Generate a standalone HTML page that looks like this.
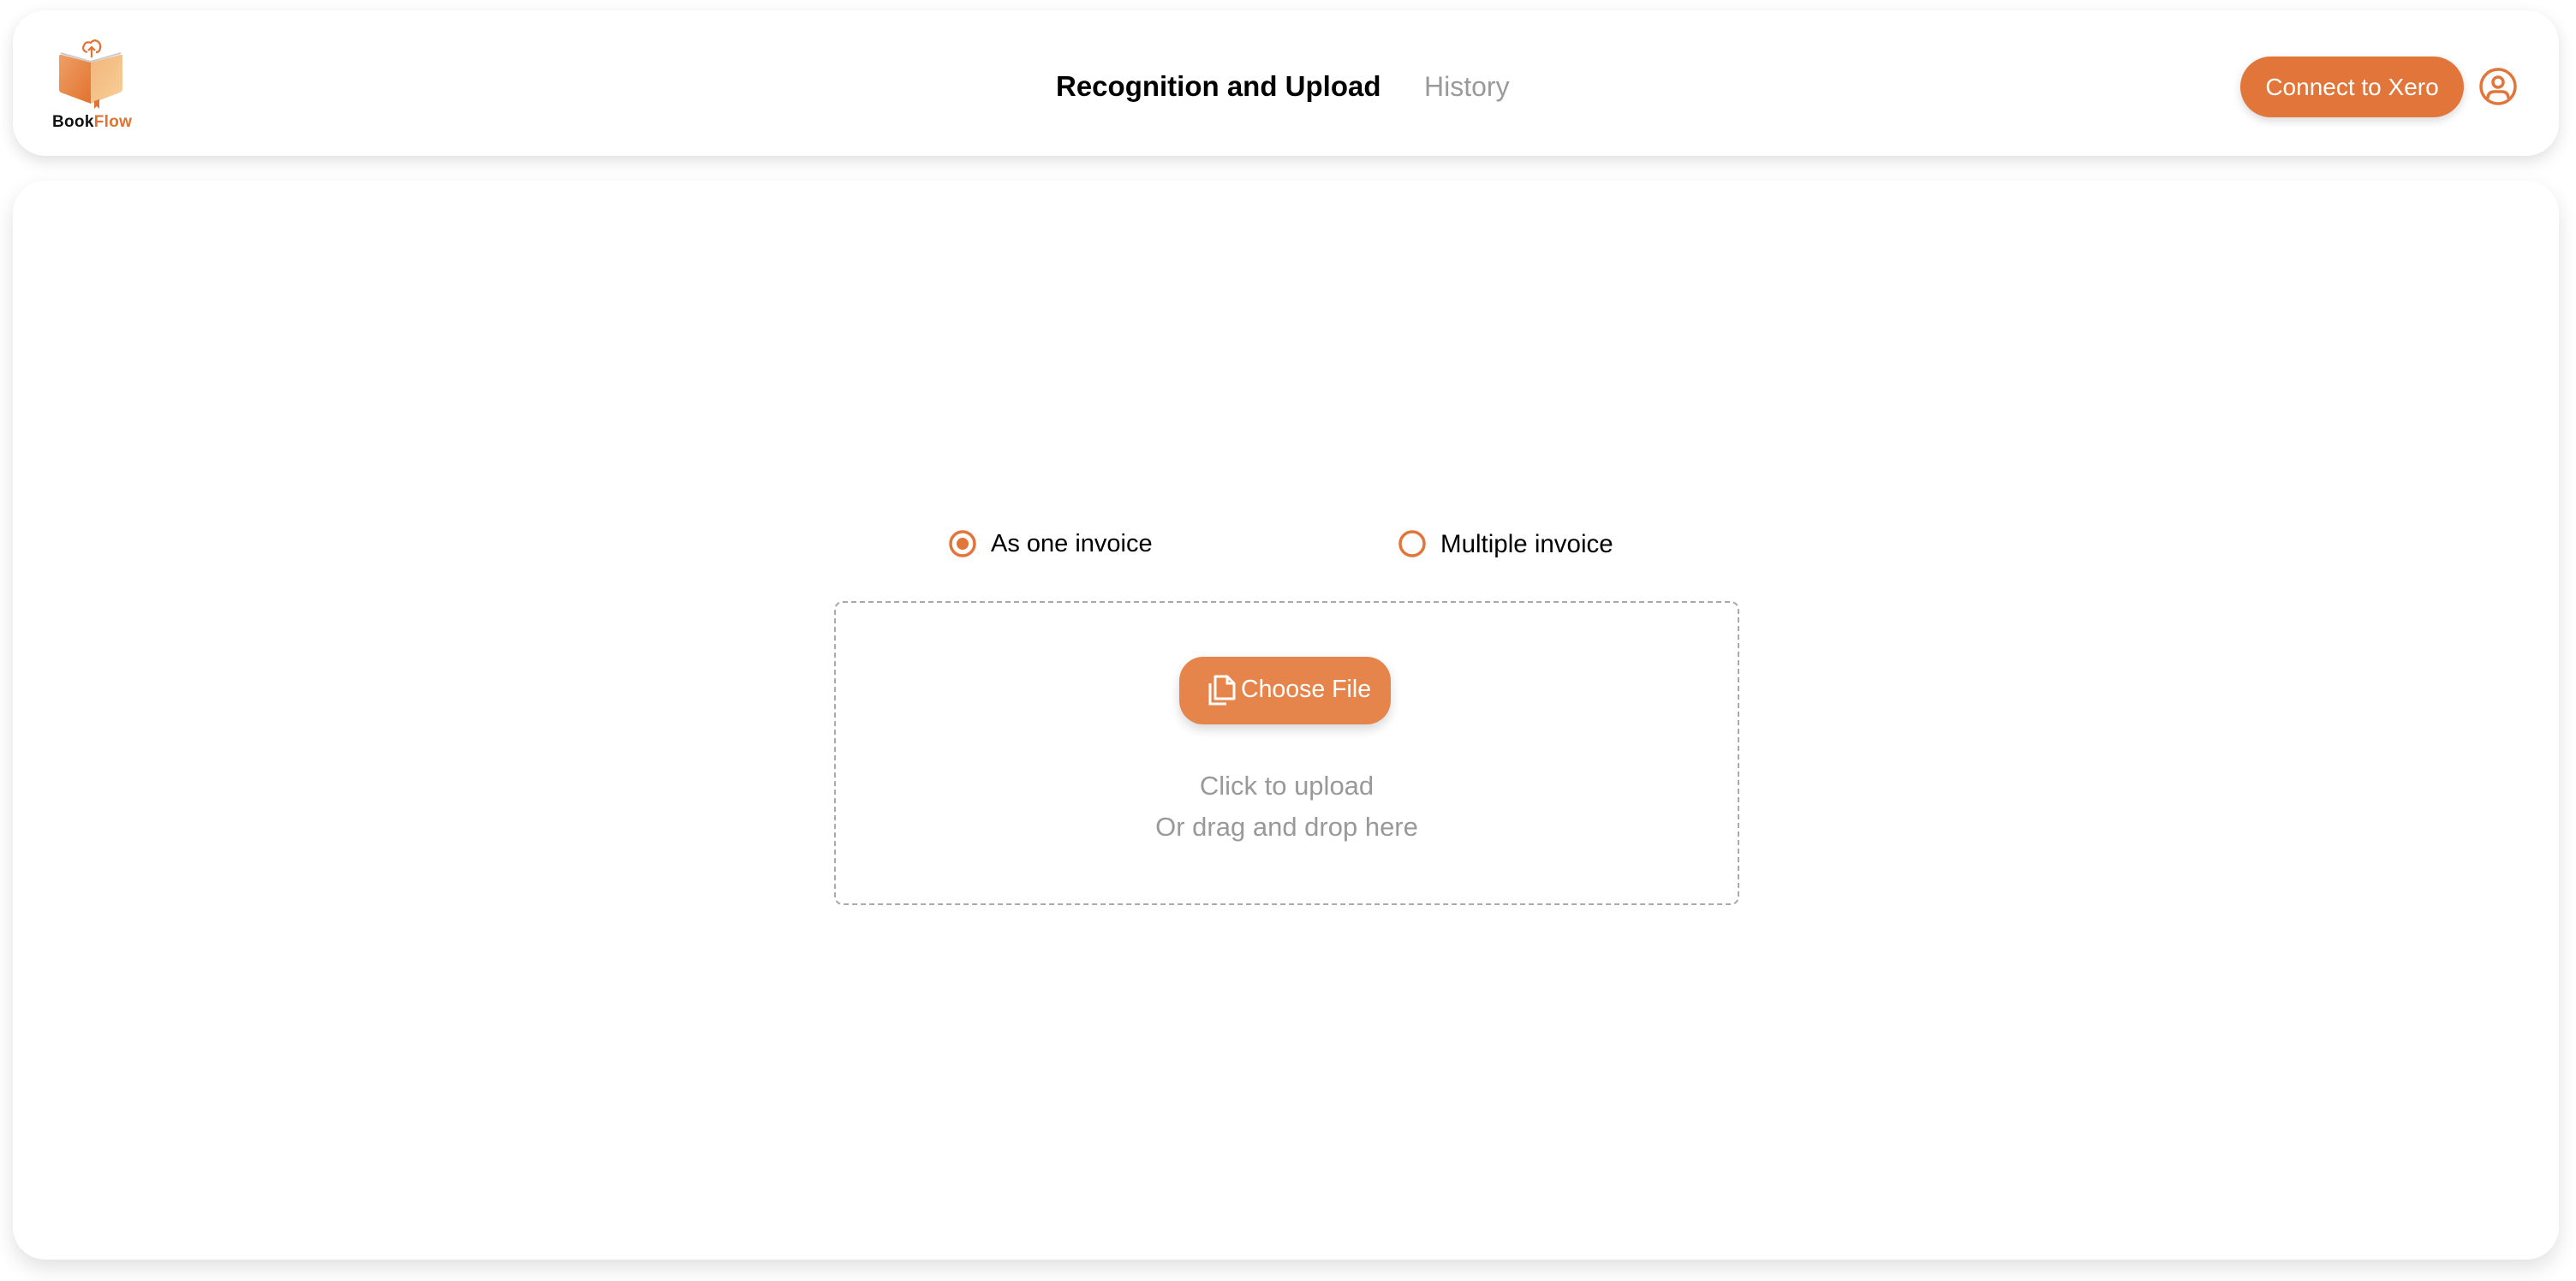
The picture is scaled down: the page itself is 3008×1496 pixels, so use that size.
<!DOCTYPE html>
<html><head><meta charset="utf-8"><style>
html,body{margin:0;padding:0}
body{width:3008px;height:1496px;background:#fff;position:relative;overflow:hidden;font-family:"Liberation Sans",sans-serif}
.card{position:absolute;background:#fff;border-radius:38px;box-shadow:0 6px 18px rgba(0,0,0,0.13)}
.abs{position:absolute}
</style></head><body>
<div class="card" style="left:15px;top:12px;width:2973px;height:170px"></div>
<div class="card" style="left:15px;top:211px;width:2973px;height:1260px;box-shadow:0 10px 24px rgba(0,0,0,0.12)"></div>

<svg class="abs" style="left:60px;top:44px" width="100" height="86" viewBox="0 0 100 86">
<defs>
<linearGradient id="gl" x1="0" y1="0" x2="1" y2="1"><stop offset="0" stop-color="#eea066"/><stop offset="1" stop-color="#e2722f"/></linearGradient>
<linearGradient id="gr" x1="0" y1="0" x2="1" y2="1"><stop offset="0" stop-color="#f2b57c"/><stop offset="1" stop-color="#f7cf97"/></linearGradient>
</defs>
<path d="M11 18 L46 28 L81 18" fill="none" stroke="#ccc" stroke-width="2"/>
<path d="M9 22 Q9 19 12 20 L46 29 L46 77 L11 64 Q9 63 9 60 Z" fill="url(#gl)"/>
<path d="M46 29 L80 20 Q83 19 83 22 L83 60 Q83 63 80 64 L46 77 Z" fill="url(#gr)"/>
<path d="M50 74 L50 83 L53 80 L56 83 L56 72 Z" fill="#e2722f"/>
<path d="M42 17 Q35 15 38 9 Q40 4 46 6 Q50 1 55 5 Q59 9 56 15 Q55 17 52 17" fill="none" stroke="#e2722f" stroke-width="2.2"/>
<path d="M47 23 L47 12 M43 15 L47 11 L51 15" fill="none" stroke="#e2722f" stroke-width="2.2"/>
</svg>
<div class="abs" style="left:61px;top:132px;font-size:19px;font-weight:bold;letter-spacing:0.3px;color:#111">Book<span style="color:#e2722f">Flow</span></div>

<div class="abs" style="left:1233px;top:82px;font-size:33px;font-weight:bold;color:#000">Recognition and Upload</div>
<div class="abs" style="left:1663px;top:83px;font-size:32px;color:#9a9a9a">History</div>

<div class="abs" style="left:2616px;top:66px;width:261px;height:71px;border-radius:36px;background:#e2763a;box-shadow:0 4px 10px rgba(0,0,0,0.15);color:#fff;font-size:28px;line-height:71px;text-align:center">Connect to Xero</div>
<svg class="abs" style="left:2894px;top:78px" width="46" height="46" viewBox="0 0 46 46">
<circle cx="23" cy="23" r="20" fill="none" stroke="#e2763a" stroke-width="3.5"/>
<circle cx="23" cy="18" r="6" fill="none" stroke="#e2763a" stroke-width="3.5"/>
<path d="M11 37 Q11 29 19 29 L27 29 Q35 29 35 37" fill="none" stroke="#e2763a" stroke-width="3.5"/>
</svg>

<svg class="abs" style="left:1107px;top:618px" width="34" height="34"><circle cx="17" cy="17" r="14" fill="none" stroke="#e2763a" stroke-width="3.5"/><circle cx="17" cy="17" r="7" fill="#e2763a"/></svg>
<div class="abs" style="left:1157px;top:619px;font-size:29px;color:#000">As one invoice</div>
<svg class="abs" style="left:1632px;top:618px" width="34" height="34"><circle cx="17" cy="17" r="14" fill="none" stroke="#e2763a" stroke-width="3.5"/></svg>
<div class="abs" style="left:1682px;top:619px;font-size:29.5px;color:#000">Multiple invoice</div>

<div class="abs" style="left:974px;top:702px;width:1053px;height:351px;border:2px dashed #aaa;border-radius:10px"></div>
<div class="abs" style="left:1377px;top:767px;width:247px;height:79px;border-radius:28px;background:#e5854c;box-shadow:0 6px 12px rgba(0,0,0,0.15)"></div>
<svg class="abs" style="left:1408px;top:786px" width="38" height="40" viewBox="0 0 38 40">
<path d="M5 12 L5 36 L24 36" fill="none" stroke="#fff" stroke-width="3"/>
<path d="M11 4 L25 4 L33 12 L33 30 L11 30 Z" fill="none" stroke="#fff" stroke-width="3" stroke-linejoin="round"/>
<path d="M25 4 L25 12 L33 12" fill="none" stroke="#fff" stroke-width="3"/>
</svg>
<div class="abs" style="left:1449px;top:789px;font-size:28.5px;color:#fff">Choose File</div>

<div class="abs" style="left:974px;width:1057px;top:894px;font-size:31px;color:#999;text-align:center;line-height:48px">Click to upload<br>Or drag and drop here</div>
</body></html>
